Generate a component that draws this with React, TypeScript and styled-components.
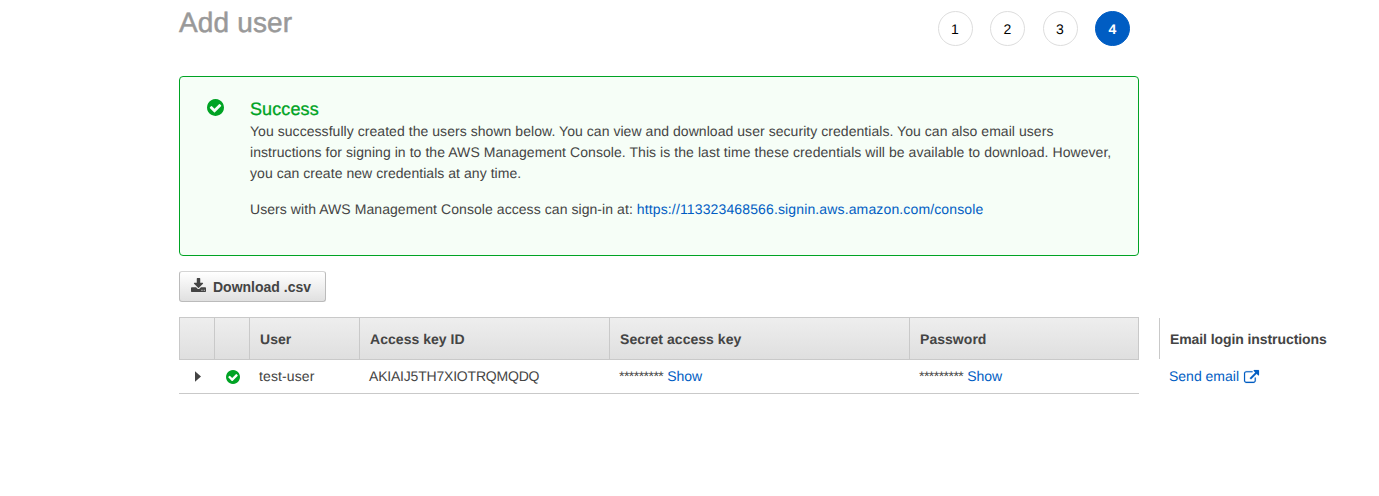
import React from 'react';
import styled, { createGlobalStyle } from 'styled-components';

const GlobalStyle = createGlobalStyle`
  *, *::before, *::after { box-sizing: border-box; }
  body {
    margin: 0;
    background: #fff;
    color: #444;
    font-family: "Liberation Sans", Arial, sans-serif;
    font-size: 14px;
    line-height: 21px;
    overflow-x: hidden;
    text-rendering: geometricPrecision;
  }
`;

const Page = styled.main`
  width: 960px;
  margin-left: 179px;
  padding-top: 5px;
`;

const TitleBar = styled.header`
  display: flex;
  justify-content: space-between;
  height: 71px;
`;

const Title = styled.h1`
  margin: 0;
  color: #999;
  font-size: 28px;
  line-height: 35px;
  font-weight: 400;
  letter-spacing: 0.15px;
  -webkit-text-stroke: 0.5px #999;
`;

const Steps = styled.ol`
  display: flex;
  gap: 17.5px;
  margin: 6px 9px 0 0;
  padding: 0;
  list-style: none;
`;

const Step = styled.li<{ $active?: boolean }>`
  width: 35px;
  height: 35px;
  border: 1px solid ${p => (p.$active ? '#005dc3' : '#ddd')};
  border-radius: 50%;
  background: ${p => (p.$active ? '#005dc3' : '#fff')};
  color: ${p => (p.$active ? '#fff' : '#000')};
  font-weight: ${p => (p.$active ? 700 : 400)};
  line-height: 34px;
  text-align: center;
`;

const Alert = styled.section`
  display: flex;
  height: 180px;
  padding: 21px 20px 0 27px;
  border: 1px solid #00a324;
  border-radius: 4px;
  background: #f6fef7;
`;

const AlertIcon = styled.div`
  width: 43px;
  padding-top: 1px;
  line-height: 0;
`;

const AlertBody = styled.div`
  flex: 1;
`;

const AlertTitle = styled.h2`
  margin: 0;
  color: #00a324;
  font-size: 18px;
  font-weight: 400;
  line-height: 23px;
  letter-spacing: 0.1px;
  -webkit-text-stroke: 0.3px #00a324;
`;

const Line = styled.span<{ $tracking: number }>`
  display: block;
  white-space: nowrap;
  letter-spacing: ${p => p.$tracking}px;
`;

const Paragraph = styled.p`
  margin: 0 0 15px;
`;

const Link = styled.a`
  color: #005dc3;
  text-decoration: none;
`;

const DownloadButton = styled.button`
  display: flex;
  align-items: center;
  gap: 7px;
  width: 147px;
  height: 31px;
  margin: 15px 0;
  padding: 1px 0 0 11px;
  border: 1px solid #bbb;
  border-top-color: #d5d5d5;
  border-radius: 3px;
  background: linear-gradient(#fff, #e0e0e0);
  color: #444;
  font: 700 14px/21px "Liberation Sans", Arial, sans-serif;
  white-space: nowrap;

  svg { margin-bottom: 4px; }
`;

const Results = styled.div`
  display: flex;
  gap: 20px;
`;

const Columns = styled.div`
  display: grid;
  flex: none;
  grid-template-columns: 35px 35px 110px 250px 300px 230px;
  width: 960px;
`;

const HeadCell = styled.div`
  height: 43px;
  padding-left: 10px;
  border: solid #c9c9c9;
  border-width: 1px 0 1px 1px;
  background: linear-gradient(#eee, #dfdfdf);
  font-weight: 700;
  line-height: 42px;
  letter-spacing: 0.04px;
  white-space: nowrap;

  &:nth-child(6) { border-right-width: 1px; }
`;

const Cell = styled.div<{ $centered?: boolean }>`
  display: flex;
  align-items: center;
  justify-content: ${p => (p.$centered ? 'center' : 'flex-start')};
  height: 34px;
  padding-left: ${p => (p.$centered ? 2 : 10)}px;
  border-bottom: 1px solid #c9c9c9;
  white-space: pre;
`;

const OverflowColumn = styled.div`
  flex: none;
  width: 200px;
`;

const OverflowHead = styled.div`
  height: 41px;
  margin: 1px 0;
  padding-left: 10px;
  border-left: 1px solid #c9c9c9;
  font-weight: 700;
  line-height: 42px;
  letter-spacing: -0.085px;
`;

const OverflowCell = styled(Cell)`
  border-bottom-color: transparent;
`;

const Tracked = styled.span<{ $tracking: number }>`
  letter-spacing: ${p => p.$tracking}px;
`;

const Glyph = styled.svg`
  display: block;
  flex: none;
  fill: currentColor;
  overflow: visible;
`;

const Check = styled(Glyph)`
  color: #00a324;
`;

const CheckIcon = ({ size }: { size: number }) => (
  <Check width={size} height={size} viewBox="128 128 1536 1536">
    <path d="M1412 734q0-28-18-46l-91-90q-19-19-45-19t-45 19l-408 407-226-226q-19-19-45-19t-45 19l-91 90q-18 18-18 46 0 27 18 45l362 362q19 19 45 19 27 0 46-19l543-543q18-18 18-45zm252 162q0 209-103 385.5t-279.5 279.5-385.5 103-385.5-103-279.5-279.5-103-385.5 103-385.5 279.5-279.5 385.5-103 385.5 103 279.5 279.5 103 385.5z" />
  </Check>
);

const DownloadIcon = () => (
  <Glyph width="15" height="14" viewBox="64 0 1664 1536" preserveAspectRatio="none">
    <path d="M1344 1344q0-26-19-45t-45-19-45 19-19 45 19 45 45 19 45-19 19-45zm256 0q0-26-19-45t-45-19-45 19-19 45 19 45 45 19 45-19 19-45zm128-224v320q0 40-28 68t-68 28h-1472q-40 0-68-28t-28-68v-320q0-40 28-68t68-28h465l135 136q58 56 136 56t136-56l136-136h464q40 0 68 28t28 68zm-325-569q17 41-14 70l-448 448q-18 19-45 19t-45-19l-448-448q-31-29-14-70 17-39 59-39h256v-448q0-26 19-45t45-19h256q26 0 45 19t19 45v448h256q42 0 59 39z" />
  </Glyph>
);

const ExternalIcon = () => (
  <Glyph width="15" height="13" viewBox="0 0 1792 1536" stroke="currentColor" strokeWidth="20">
    <path d="M1408 928v320q0 119-84.5 203.5t-203.5 84.5h-832q-119 0-203.5-84.5t-84.5-203.5v-832q0-119 84.5-203.5t203.5-84.5h704q14 0 23 9t9 23v64q0 14-9 23t-23 9h-704q-66 0-113 47t-47 113v832q0 66 47 113t113 47h832q66 0 113-47t47-113v-320q0-14 9-23t23-9h64q14 0 23 9t9 23zm384-864v512q0 26-19 45t-45 19-45-19l-176-176-652 652q-10 10-23 10t-23-10l-114-114q-10-10-10-23t10-23l652-652-176-176q-19-19-19-45t19-45 45-19h512q26 0 45 19t19 45z" />
  </Glyph>
);

const ExpandIcon = () => (
  <Glyph width="6" height="11" viewBox="0 0 6 11">
    <path d="M0 0.2 6 5.5 0 10.8z" />
  </Glyph>
);

const EmailLink = styled(Link)`
  display: flex;
  align-items: center;
  gap: 5px;
`;

const HiddenValue = () => (
  <Cell>
    <span><Tracked $tracking={-0.53}>*********</Tracked> <Link>Show</Link></span>
  </Cell>
);

export default function App() {
  return (
    <>
      <GlobalStyle />
      <Page>
        <TitleBar>
          <Title>Add user</Title>
          <Steps>
            <Step>1</Step>
            <Step>2</Step>
            <Step>3</Step>
            <Step $active>4</Step>
          </Steps>
        </TitleBar>
        <Alert>
          <AlertIcon><CheckIcon size={17} /></AlertIcon>
          <AlertBody>
            <AlertTitle>Success</AlertTitle>
            <Paragraph>
              <Line $tracking={0.05}>You successfully created the users shown below. You can view and download user security credentials. You can also email users</Line>
              <Line $tracking={0.061}>instructions for signing in to the AWS Management Console. This is the last time these credentials will be available to download. However,</Line>
              <Line $tracking={0.045}>you can create new credentials at any time.</Line>
            </Paragraph>
            <Paragraph>
              <Line $tracking={0.065}>
                Users with AWS Management Console access can sign-in at:{' '}
                <Tracked as={Link} $tracking={0.135}>https://113323468566.signin.aws.amazon.com/console</Tracked>
              </Line>
            </Paragraph>
          </AlertBody>
        </Alert>
        <DownloadButton><DownloadIcon />Download .csv</DownloadButton>
        <Results>
          <Columns>
            <HeadCell />
            <HeadCell />
            <HeadCell>User</HeadCell>
            <HeadCell>Access key ID</HeadCell>
            <HeadCell>Secret access key</HeadCell>
            <HeadCell>Password</HeadCell>
            <Cell $centered><ExpandIcon /></Cell>
            <Cell $centered><CheckIcon size={14} /></Cell>
            <Cell><Tracked $tracking={0.12}>test-user</Tracked></Cell>
            <Cell><Tracked $tracking={-0.2}>AKIAIJ5TH7XIOTRQMQDQ</Tracked></Cell>
            <HiddenValue />
            <HiddenValue />
          </Columns>
          <OverflowColumn>
            <OverflowHead>Email login instructions</OverflowHead>
            <OverflowCell><EmailLink>Send email<ExternalIcon /></EmailLink></OverflowCell>
          </OverflowColumn>
        </Results>
      </Page>
    </>
  );
}
